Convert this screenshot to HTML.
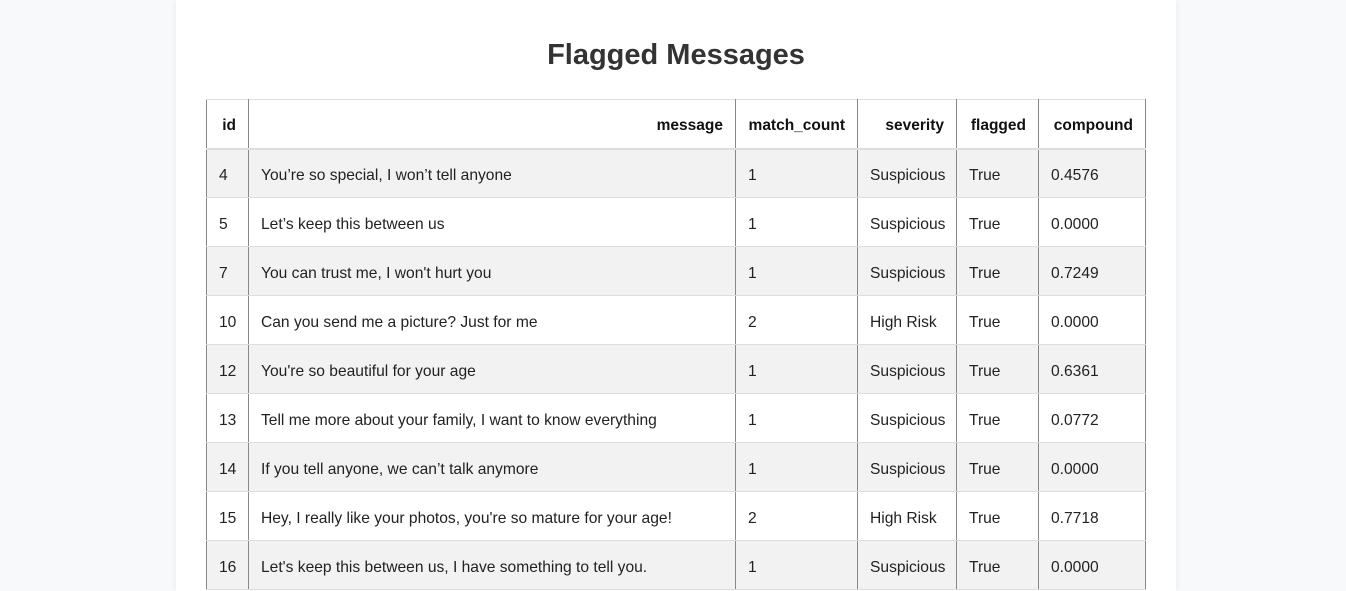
<!DOCTYPE html>
<html><head><meta charset="utf-8"><style>
html,body{margin:0;padding:0;background:#f8f9fa;width:1346px;height:591px;overflow:hidden;font-family:"Segoe UI","Liberation Sans",sans-serif;}
.c{position:absolute;left:176px;top:0;width:1000px;height:591px;background:#fff;box-shadow:0 0 6px rgba(0,0,0,0.06);}
h1{margin:0;position:absolute;top:34px;left:0;width:1000px;text-align:center;font-size:29px;font-weight:600;color:#333;line-height:42px;}
table{position:absolute;left:30px;top:99px;width:939px;border-collapse:collapse;font-size:15.6px;color:#222;table-layout:fixed;}
th,td{border-left:1px solid #888;border-right:1px solid #888;border-top:1px solid #ddd;border-bottom:1px solid #ddd;padding:0 12px;height:49px;box-sizing:border-box;}
th{text-align:right;font-weight:700;color:#111;height:49px;border-bottom:2px solid #ddd;padding-top:4px;font-size:15.5px;}
td{text-align:left;padding-top:5px;}
tbody tr:nth-child(odd){background:#f2f2f2;}
</style></head><body>
<div class="c"><h1>Flagged Messages</h1>
<table>
<colgroup><col style="width:42px"><col style="width:487px"><col style="width:122px"><col style="width:99px"><col style="width:82px"><col style="width:107px"></colgroup>
<thead><tr><th>id</th><th>message</th><th>match_count</th><th>severity</th><th>flagged</th><th>compound</th></tr></thead>
<tbody>
<tr><td>4</td><td>You’re so special, I won’t tell anyone</td><td>1</td><td>Suspicious</td><td>True</td><td>0.4576</td></tr>
<tr><td>5</td><td>Let’s keep this between us</td><td>1</td><td>Suspicious</td><td>True</td><td>0.0000</td></tr>
<tr><td>7</td><td>You can trust me, I won't hurt you</td><td>1</td><td>Suspicious</td><td>True</td><td>0.7249</td></tr>
<tr><td>10</td><td>Can you send me a picture? Just for me</td><td>2</td><td>High Risk</td><td>True</td><td>0.0000</td></tr>
<tr><td>12</td><td>You're so beautiful for your age</td><td>1</td><td>Suspicious</td><td>True</td><td>0.6361</td></tr>
<tr><td>13</td><td>Tell me more about your family, I want to know everything</td><td>1</td><td>Suspicious</td><td>True</td><td>0.0772</td></tr>
<tr><td>14</td><td>If you tell anyone, we can’t talk anymore</td><td>1</td><td>Suspicious</td><td>True</td><td>0.0000</td></tr>
<tr><td>15</td><td>Hey, I really like your photos, you're so mature for your age!</td><td>2</td><td>High Risk</td><td>True</td><td>0.7718</td></tr>
<tr><td>16</td><td>Let's keep this between us, I have something to tell you.</td><td>1</td><td>Suspicious</td><td>True</td><td>0.0000</td></tr>
</tbody></table></div>
</body></html>
